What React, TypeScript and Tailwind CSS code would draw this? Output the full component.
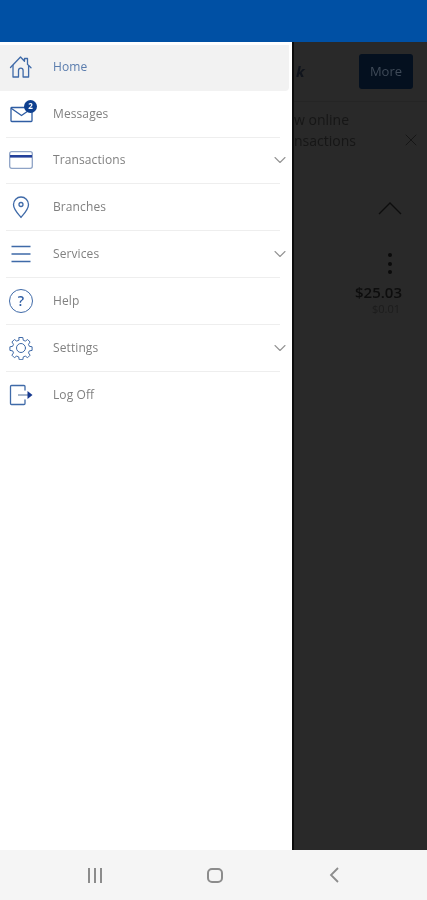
import { ChevronDown, X } from "lucide-react";
import type { ReactNode } from "react";

const iconProps = {
  fill: "none",
  stroke: "#3f6aa8",
  strokeWidth: 1.3,
  strokeLinecap: "round" as const,
  strokeLinejoin: "round" as const,
};

function HomeIcon() {
  return (
    <svg width="24" height="24" viewBox="0 0 24 24" {...iconProps}>
      <path d="M1.5 12.5 11.5 2l4 4.2V3.5h3v5.9l3.5 3.4" />
      <path d="M4 10.5V22h5.5v-6.5a2.3 2.3 0 0 1 4.6 0V22h5.5V10.5" />
    </svg>
  );
}

function MailIcon() {
  return (
    <div className="relative h-[24px] w-[28px]">
      <svg width="24" height="24" viewBox="0 0 24 24" className="ml-[1px]" {...iconProps}>
        <rect x="1" y="5.5" width="21" height="14" rx="0.8" stroke="#2f5da3" />
        <path d="m1.5 6.5 10 7 10-7" stroke="#2f5da3" />
      </svg>
      <span className="absolute right-[0px] top-[-2px] flex h-[13px] w-[13px] items-center justify-center rounded-full bg-[#0d3f8f] text-[8px] font-bold leading-none text-white">
        2
      </span>
    </div>
  );
}

function CardIcon() {
  return (
    <svg width="24" height="24" viewBox="0 0 24 24">
      <rect x="0.7" y="3.7" width="22.6" height="16.6" rx="2" fill="none" stroke="#8ea3c6" strokeWidth="1.3" />
      <rect x="1" y="7" width="22" height="2.6" fill="#23409a" />
    </svg>
  );
}

function PinIcon() {
  return (
    <svg width="24" height="24" viewBox="0 0 24 24" {...iconProps}>
      <path d="M12 22.5c-1.2-2-7.5-7.5-7.5-13a7.5 7.5 0 0 1 15 0c0 5.5-6.3 11-7.5 13Z" />
      <circle cx="12" cy="9.5" r="2" />
    </svg>
  );
}

function MenuIcon() {
  return (
    <svg width="24" height="24" viewBox="0 0 24 24" stroke="#3f6aa8" strokeWidth="1.4">
      <path d="M2.5 4.5h19M2.5 12h19M2.5 19.5h19" />
    </svg>
  );
}

function HelpIcon() {
  return (
    <div className="flex h-[24px] w-[24px] items-center justify-center rounded-full border border-[#3f6aa8] text-[14px] font-semibold leading-none text-[#2f5da3]">
      ?
    </div>
  );
}

function GearIcon() {
  return (
    <svg width="24" height="24" viewBox="0 0 24 24" {...iconProps} strokeWidth={1}>
      <path d="m10.2 1.5h3.6l.5 2.8 2 .8 2.3-1.6 2.5 2.5-1.6 2.3.8 2 2.8.5v3.6l-2.8.5-.8 2 1.6 2.3-2.5 2.5-2.3-1.6-2 .8-.5 2.8h-3.6l-.5-2.8-2-.8-2.3 1.6-2.5-2.5 1.6-2.3-.8-2-2.8-.5v-3.6l2.8-.5.8-2-1.6-2.3 2.5-2.5 2.3 1.6 2-.8Z" />
      <circle cx="12" cy="12" r="4.5" />
    </svg>
  );
}

function LogOffIcon() {
  return (
    <svg width="24" height="24" viewBox="0 0 24 24" fill="none">
      <path d="M16 7V3.5a1 1 0 0 0-1-1H2.5a1 1 0 0 0-1 1v17a1 1 0 0 0 1 1H15a1 1 0 0 0 1-1V17" stroke="#3f6aa8" strokeWidth="1.3" strokeLinecap="round" />
      <path d="M9 12h10" stroke="#9fb0c8" strokeWidth="1.8" />
      <path d="m18.5 8 5 4-5 4Z" fill="#16398f" />
    </svg>
  );
}

type Item = { label: string; icon: ReactNode; chevron?: boolean };

const items: Item[] = [
  { label: "Home", icon: <HomeIcon /> },
  { label: "Messages", icon: <MailIcon /> },
  { label: "Transactions", icon: <CardIcon />, chevron: true },
  { label: "Branches", icon: <PinIcon /> },
  { label: "Services", icon: <MenuIcon />, chevron: true },
  { label: "Help", icon: <HelpIcon /> },
  { label: "Settings", icon: <GearIcon />, chevron: true },
  { label: "Log Off", icon: <LogOffIcon /> },
];

export default function App() {
  return (
    <div className="flex h-[900px] w-[427px] flex-col overflow-hidden bg-white font-['Open_Sans',sans-serif] blur-[0.4px]">
      <div className="h-[42px] bg-[#0050a4]" />

      <div className="flex h-[808px]">
        {/* drawer */}
        <div className="w-[292px] bg-white pt-[3px]">
          {items.map((item, i) => (
            <div
              key={item.label}
              className={
                i === 0
                  ? "mr-[3px] flex h-[45.8px] items-center rounded-br-[4px] bg-[#f2f2f2] pb-[2px] pl-[9px]"
                  : "ml-[6px] mr-[12px] flex h-[46.8px] items-center border-b border-[#eeeeee] pl-[3px] last:border-b-0"
              }
            >
              <div className="w-[44px] shrink-0">{item.icon}</div>
              <span className={`text-[12px] tracking-[0.1px] ${i === 0 ? "text-[#5a7cad]" : "text-[#808080]"}`}>
                {item.label}
              </span>
              {item.chevron && (
                <ChevronDown className="ml-auto mr-[-10px] text-[#949494]" size={20} strokeWidth={1.3} />
              )}
            </div>
          ))}
        </div>

        {/* dimmed page behind the drawer */}
        <div className="flex-1 border-l-2 border-[#0b0b0b] bg-[#292929]">
          <div className="flex h-[60px] items-center justify-between border-b border-[#252525] pr-[14px]">
            <span className="pl-[2px] text-[15px] font-bold italic text-[#10141c]">k</span>
            <div className="flex h-[35px] w-[54px] items-center justify-center rounded-[3px] bg-[#04101f] text-[13px] text-[#3f4a58]">
              More
            </div>
          </div>

          <div className="flex items-center justify-between pr-[6px] pt-[7px]">
            <div className="w-[85px] overflow-hidden whitespace-nowrap text-[14px] leading-[21px] text-[#161616]">
              <div>w online</div>
              <div>nsactions</div>
            </div>
            <X className="mt-[20px] text-[#161616]" size={20} strokeWidth={1.2} />
          </div>

          <div className="mt-[50px] flex flex-col items-end pr-[25px] text-[#0d0d0d]">
            <svg width="26" height="14" viewBox="0 0 26 14" fill="none" stroke="#0d0d0d" strokeWidth="1.3" className="mr-[-1px]">
              <path d="m2 13 11-11 11 11" />
            </svg>
            <div className="mr-[10px] mt-[38px] flex flex-col gap-[4.5px]">
              <span className="h-[4px] w-[4px] rounded-full bg-[#0a0a0a]" />
              <span className="h-[4px] w-[4px] rounded-full bg-[#0a0a0a]" />
              <span className="h-[4px] w-[4px] rounded-full bg-[#0a0a0a]" />
            </div>
            <div className="mt-[10px] text-[15px] font-semibold leading-[16px]">$25.03</div>
            <div className="mr-[2px] mt-[2px] text-[11px] leading-[14px] text-[#1c1c1c]">$0.01</div>
          </div>
        </div>
      </div>

      {/* system nav */}
      <div className="flex flex-1 items-center justify-between bg-[#f5f5f5] pl-[88px] pr-[87px]">
        <div className="flex gap-[4px]">
          <span className="h-[15px] w-[2px] bg-[#8c8c8c]" />
          <span className="h-[15px] w-[2px] bg-[#8c8c8c]" />
          <span className="h-[15px] w-[2px] bg-[#8c8c8c]" />
        </div>
        <div className="h-[15px] w-[16px] rounded-[5px] border-2 border-[#8c8c8c]" />
        <svg width="12" height="16" viewBox="0 0 12 16" fill="none" stroke="#8c8c8c" strokeWidth="1.8">
          <path d="M10 1 3 8l7 7" />
        </svg>
      </div>
    </div>
  );
}
